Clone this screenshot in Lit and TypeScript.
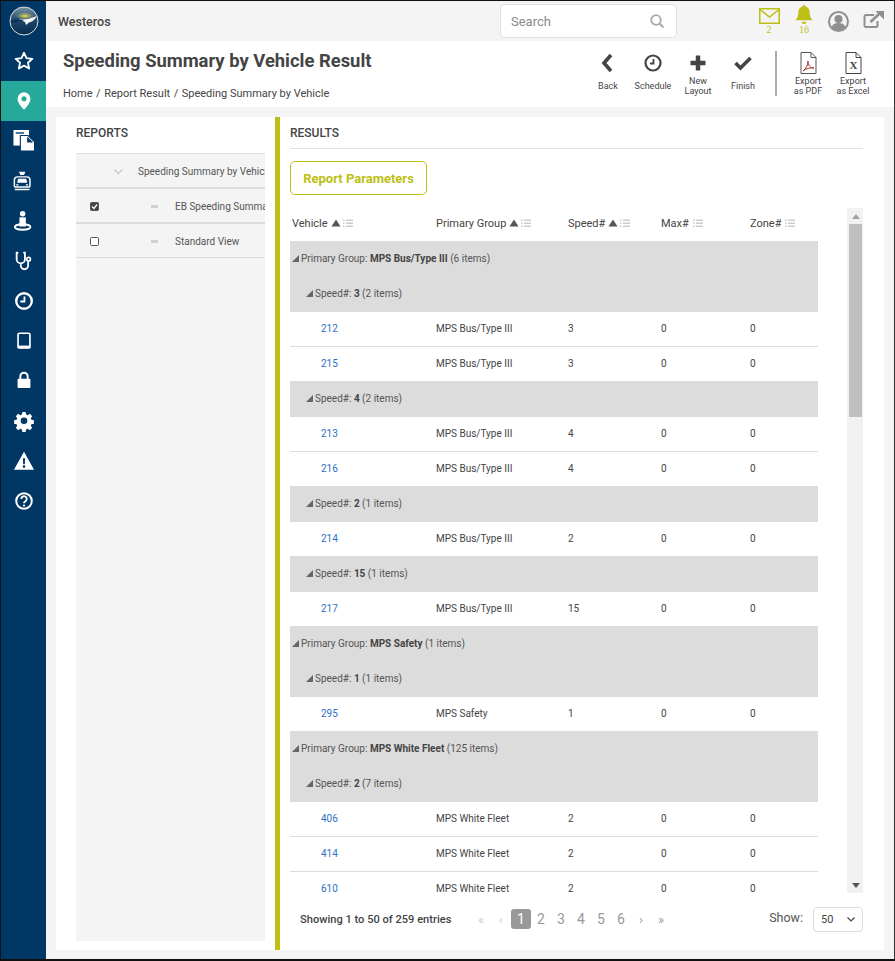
import { LitElement, html, css, svg } from "lit";
import { customElement } from "lit/decorators.js";

type Row = { g?: string; lvl?: number; label?: string; val?: string; n?: string; id?: string; pg?: string; sp?: string };
const D = (id: string, pg: string, sp: string): Row => ({ id, pg, sp });
const G = (val: string, n: string): Row => ({ lvl: 0, label: "Primary Group", val, n });
const S = (val: string, n: string): Row => ({ lvl: 1, label: "Speed#", val, n });
const BUS = "MPS Bus/Type III", WF = "MPS White Fleet";
const rows: Row[] = [
  G(BUS, "6"), S("3", "2"), D("212", BUS, "3"), D("215", BUS, "3"),
  S("4", "2"), D("213", BUS, "4"), D("216", BUS, "4"),
  S("2", "1"), D("214", BUS, "2"),
  S("15", "1"), D("217", BUS, "15"),
  G("MPS Safety", "1"), S("1", "1"), D("295", "MPS Safety", "1"),
  G(WF, "125"), S("2", "7"), D("406", WF, "2"), D("414", WF, "2"), D("610", WF, "2"),
];

const sideIcons = [
  svg`<path d="M12 3l2.700 5.900 6.400.7-4.800 4.300 1.300 6.300L12 17.100 6.400 20.200l1.300-6.300L2.900 9.600l6.400-.7z" fill="none" stroke="#fff" stroke-width="2" stroke-linejoin="round"/>`,
  svg`<path fill-rule="evenodd" d="M12 2.500a7 7 0 0 1 7 7c0 4.500-4.600 9.500-7 12-2.400-2.500-7-7.500-7-12a7 7 0 0 1 7-7zm0 4.300a2.800 2.800 0 1 0 0 5.600 2.800 2.800 0 0 0 0-5.600z" fill="#fff"/>`,
  svg`<path fill="#fff" d="M.5 0h17v17H.5z"/><path fill="#003764" d="M3 2.500h9v1.500H3z"/><path fill="#fff" stroke="#003764" stroke-width="1.200" d="M8 6h8.500l7 7v10H8z"/><path fill="#003764" d="M15.500 7v6.500h6.500z"/>`,
  svg`<g transform="translate(-2 0)"><path fill="#fff" d="M8.500 2h7L14 5.500h-4z"/><path fill="none" stroke="#fff" stroke-width="1.600" d="M7 7.500h10c2 0 3.500 1.500 3.500 3.500v6.500a1 1 0 0 1-1 1h-15a1 1 0 0 1-1-1V11c0-2 1.500-3.500 3.500-3.500z"/><path fill="#fff" d="M7.500 9.500h9l1 4.500h-11zM5.500 15.500h2.500v1.500H5.500zM16 15.500h2.500v1.500H16zM4 20.500h16V22H4z"/></g>`,
  svg`<g transform="translate(-1.500 0)"><circle cx="12" cy="4" r="3" fill="#fff"/><path fill="#fff" d="M8.500 8h7v10h-7z"/><ellipse cx="12" cy="18.500" rx="8.500" ry="3" fill="none" stroke="#fff" stroke-width="2"/></g>`,
  svg`<path fill="none" stroke="#fff" stroke-width="2" stroke-linecap="round" d="M5 3H4v7a4.500 4.500 0 0 0 9 0V3h-1M8.500 14.500V17a4 4 0 0 0 8 0v-4"/><circle cx="17" cy="10" r="2" fill="none" stroke="#fff" stroke-width="1.800"/>`,
  svg`<circle cx="12" cy="12" r="8.500" fill="none" stroke="#fff" stroke-width="2.600"/><path d="M12.500 7v5.500H8" fill="none" stroke="#fff" stroke-width="2"/>`,
  svg`<rect x="5.500" y="3.500" width="13" height="16" rx="1.500" fill="none" stroke="#fff" stroke-width="1.800"/><path d="M5 17h14v3H5z" fill="#fff"/>`,
  svg`<g transform="translate(0 -1)"><path fill="none" stroke="#fff" stroke-width="2.200" d="M8 11V8a4 4 0 0 1 8 0v3"/><rect x="5" y="10.500" width="14" height="10" rx="1" fill="#fff"/></g>`,
  svg`<path fill="#fff" fill-rule="evenodd" d="M10 2h4l.6 3 1.900.8 2.600-1.700 2.800 2.800-1.700 2.600.8 1.900 3 .6v4l-3 .6-.8 1.900 1.700 2.600-2.800 2.800-2.600-1.700-1.900.8-.6 3h-4l-.6-3-1.900-.8-2.600 1.700-2.800-2.800 1.700-2.600-.8-1.900-3-.6v-4l3-.6.8-1.900L2.100 6.900l2.800-2.800 2.600 1.700L9.400 5zM12 8.500a4 4 0 1 0 0 8 4 4 0 0 0 0-8z" transform="translate(1.200 .5) scale(.9)"/>`,
  svg`<path fill-rule="evenodd" fill="#fff" d="M12 2l11 19.500H1zM10.800 9l.3 6.500h1.800l.3-6.500zM12 16.500a1.500 1.500 0 1 0 0 3 1.500 1.500 0 0 0 0-3z"/>`,
  svg`<circle cx="12" cy="12" r="8.500" fill="none" stroke="#fff" stroke-width="2.200"/><path d="M9 9.800a3 3 0 1 1 4.600 2.500c-1 .7-1.600 1.200-1.600 2.200" fill="none" stroke="#fff" stroke-width="2"/><circle cx="12" cy="17" r="1.200" fill="#fff"/>`,
];

const actions: [string, string, any][] = [
  ["Back", "", svg`<path d="M15 4l-7 8 7 8" fill="none" stroke="#444" stroke-width="3.600"/>`],
  ["Schedule", "", svg`<circle cx="12" cy="12" r="7.500" fill="none" stroke="#444" stroke-width="2.200"/><path d="M12.500 8v4.500H9" fill="none" stroke="#444" stroke-width="1.800"/>`],
  ["New", "Layout", svg`<path d="M12 4.500v15M4.500 12h15" stroke="#444" stroke-width="4.500"/>`],
  ["Finish", "", svg`<path d="M4.500 12l5 5 10-10" fill="none" stroke="#444" stroke-width="3.600"/>`],
];

@customElement("app-root")
export class AppRoot extends LitElement {
  static styles = css`
    :host { display: block; width: 895px; height: 961px; box-sizing: border-box; border: 1px solid #111; border-right: 1px solid #333; border-bottom: 2px solid #111; background: #f4f4f4; font-family: Roboto, "Liberation Sans", sans-serif; color: #444; overflow: hidden; }
    * { box-sizing: border-box; }
    .app { display: flex; height: 100%; }
    .side { width: 45px; flex: none; background: #003764; display: flex; flex-direction: column; align-items: stretch; }
    .logo { height: 40px; display: flex; align-items: center; justify-content: center; }
    .si { height: 40px; display: flex; align-items: center; justify-content: center; }
    .si.on { background: #26a99a; }
    .main { flex: 1; min-width: 0; display: flex; flex-direction: column; }
    .top { height: 40px; flex: none; display: flex; align-items: center; padding-left: 12px; background: #f4f4f4; }
    .brand { font-size: 12.500px; font-weight: 500; width: 442px; }
    .search { width: 177px; height: 34px; border: 1px solid #e1e1e1; border-radius: 5px; background: #fff; display: flex; align-items: center; justify-content: space-between; padding: 0 11px 0 10px; font-size: 13px; color: #8a8a8a; }
    .tops { display: flex; margin-left: 80px; align-items: flex-start; height: 40px; }
    .ti { position: relative; display: flex; flex-direction: column; align-items: center; font-family: "Liberation Serif", serif; font-size: 10px; color: #bcbf14; line-height: 10px; }
    .body { flex: 1; min-height: 0; display: flex; flex-direction: column; }
    .head { height: 66px; flex: none; background: #fff; display: flex; justify-content: space-between; padding: 0 18.500px 0 17px; }
    h1 { margin: 9px 0 0; font-size: 18.400px; line-height: 22px; font-weight: 700; color: #444; }
    .crumbs { margin-top: 15px; font-size: 11px; line-height: 14px; color: #444; display: flex; gap: 3.500px; }
    .acts { display: flex; align-items: flex-start; padding-top: 10px; }
    .act { width: 45px; display: flex; flex-direction: column; align-items: center; font-size: 9px; line-height: 10px; color: #444; text-align: center; white-space: nowrap; }
    .act .lbl { height: 20px; display: flex; align-items: center; margin-top: 1px; }
    .act.ex .lbl { margin-top: 1px; }
    .sep { width: 2px; height: 45px; background: #aaa; margin: 0 9px 0 9px; }
    .content { flex: 1; min-height: 0; margin: 10px 10px 9px 10px; background: #fff; display: flex; }
    .reports { width: 219px; flex: none; padding: 0 10px 9px 20px; display: flex; flex-direction: column; }
    .ph { font-size: 12px; font-weight: 500; line-height: 14px; padding-top: 9px; color: #444; }
    .tree { flex: 1; margin-top: 13px; background: #f4f4f4; border-top: 1px solid #e1e1e1; overflow: hidden; }
    .tr { display: flex; align-items: center; height: 35px; padding-top: 2px; border-bottom: 2px solid #ddd; font-size: 10px; white-space: nowrap; overflow: hidden; color: #555; }
    .tr.last { height: 34px; border-bottom-width: 1px; }
    .chev { margin-left: 38px; margin-right: 15px; flex: none; }
    .chk { width: 9px; height: 9px; margin-left: 14px; flex: none; border: 1px solid #555; border-radius: 1.500px; background: #fff; display: flex; }
    .chk.on { background: #444; }
    .dash { width: 7px; height: 3px; background: #d2d2d2; margin-left: 52px; margin-right: 17px; flex: none; }
    .bar { width: 5px; flex: none; background: #bcbf14; }
    .results { flex: 1; min-width: 0; padding: 0 21px 0 10px; display: flex; flex-direction: column; }
    .rh { height: 32px; border-bottom: 1px solid #e1e1e1; flex: none; }
    .btn { align-self: flex-start; margin-top: 12px; width: 137px; height: 34px; border: 1px solid #bcbf14; border-radius: 5px; color: #bcbf14; font-size: 13px; font-weight: 700; display: flex; align-items: center; justify-content: center; flex: none; }
    .tbl { height: 685px; margin-top: 13px; flex: none; display: flex; overflow: hidden; }
    .gridwrap { width: 528px; flex: none; overflow: hidden; }
    .sb { width: 17px; margin-left: 29px; flex: none; background: #f1f1f1; display: flex; flex-direction: column; align-items: center; padding: 0 2px; }
    .arr { height: 16px; display: flex; align-items: center; justify-content: center; }
    .thumb { width: 13px; height: 193px; background: #bfbfbf; }
    .grow { flex: 1; }
    .row { display: grid; grid-template-columns: 146px 132px 93px 89px 1fr; height: 35px; align-items: center; font-size: 10px; color: #444; padding-bottom: 1px; }
    .row.hd { height: 33px; font-size: 11px; padding-bottom: 3px; }
    .row.hd > div { display: flex; align-items: center; }
    .row.hd > div:first-child { padding-left: 2px; }
    .sorti { margin-left: 3px; flex: none; }
    .linei { flex: none; }
    .linei.a { margin-left: 2px; }
    .linei.b { margin-left: 4px; }
    .row.d { border-bottom: 1px solid #ddd; }
    .row.d a { color: #2e6fc4; padding-left: 31px; display: block; }
    .grp { height: 35px; background: #dcdcdc; display: flex; align-items: center; font-size: 10px; color: #555; gap: 2px; padding-left: 2px; padding-bottom: 2px; white-space: pre; }
    .grp.first { height: 36px; }
    .grp.l1 { padding-left: 16px; }
    .grp b { font-weight: 700; color: #444; }
    .foot { display: flex; align-items: center; height: 40px; margin-top: 6px; padding-left: 10px; }
    .count { font-size: 11.100px; font-weight: 500; width: 171px; white-space: nowrap; }
    .pages { display: flex; align-items: center; font-size: 14px; color: #999; width: 282px; }
    .pg { width: 20px; text-align: center; }
    .pg.on { width: 20px; height: 20px; line-height: 20px; background: #999; color: #fff; border-radius: 3px; }
    .pi { width: 20px; text-align: center; font-size: 13px; color: #ccc; }
    .pi.dk { color: #999; }
    .show { font-size: 12.500px; color: #555; margin-left: auto; margin-top: -3px; }
    .sel { width: 50px; height: 25px; margin-left: 10px; margin-right: 0; border: 1px solid #ddd; border-radius: 4px; display: flex; align-items: center; justify-content: space-between; padding: 0 7px; font-size: 11px; background: #fff; color: #444; }
  `;

  sort() { return html`<svg class="sorti" width="10" height="8" viewBox="0 0 10 8"><path d="M5 0.500l4.500 7H.5z" fill="#555"/></svg>`; }
  lines(sorted = true) { return html`<svg class="linei ${sorted ? "a" : "b"}" width="10" height="8" viewBox="0 0 10 8" fill="#ccc"><path d="M0 .5h1.500V2H0zM0 3.500h1.500V5H0zM0 6.500h1.500V8H0zM3 .5h7V2H3zM3 3.500h7V5H3zM3 6.500h7V8H3z"/></svg>`; }
  tri() { return svg`<svg width="7" height="7" viewBox="0 0 7 7"><path d="M7 0v7H0z" fill="#666"/></svg>`; }

  render() {
    return html`<div class="app">
      <nav class="side">
        <div class="logo"><svg width="30" height="30" viewBox="0 0 30 30">
          <defs>
            <linearGradient id="lg" x1="0" y1="0" x2="0" y2="1"><stop offset="0" stop-color="#7d93a3"/><stop offset=".45" stop-color="#1d4a6e"/><stop offset="1" stop-color="#062b4c"/></linearGradient>
            <radialGradient id="lh"><stop offset="0" stop-color="#e6e25a"/><stop offset="1" stop-color="#c9c74a" stop-opacity="0"/></radialGradient>
          </defs>
          <circle cx="15" cy="15" r="14" fill="url(#lg)" stroke="#d8dde0" stroke-width="1"/>
          <ellipse cx="16" cy="10" rx="9" ry="4" fill="url(#lh)"/>
          <path d="M9 13c5 1 10 .5 19-3-2 4-5 5.500-8 6.500l-3 2.500-1-3z" fill="#f5f5f5"/>
          <path d="M2 16c5-3 9-3 13-1-5 0-9 .5-13 2z" fill="#062b4c"/>
        </svg></div>
        ${sideIcons.map((p, i) => html`<div class="si ${i === 1 ? "on" : ""}"><svg width="22" height="22" viewBox="0 0 24 24">${p}</svg></div>`)}
      </nav>
      <div class="main">
        <div class="top">
          <div class="brand">Westeros</div>
          <div class="search"><span>Search</span><svg width="16" height="16" viewBox="0 0 16 16"><circle cx="7" cy="7" r="4.800" fill="none" stroke="#aaa" stroke-width="1.800"/><path d="M10.500 10.500l4 4" stroke="#aaa" stroke-width="2.200"/></svg></div>
          <div class="tops">
            <div class="ti" style="width:24px;margin-right:11px;padding-top:7px"><svg width="21" height="16" viewBox="0 0 21 16"><rect x=".75" y=".75" width="19.500" height="14.500" fill="none" stroke="#bcbf14" stroke-width="1.500"/><path d="M1 1.500l9.500 7.500L20 1.500" fill="none" stroke="#bcbf14" stroke-width="1.500"/></svg><span style="margin-top:1px">2</span></div>
            <div class="ti" style="width:24px;margin-right:12px;padding-top:4px"><svg width="20" height="20" viewBox="0 0 20 21"><path d="M10 0a1.500 1.500 0 0 1 1.500 1.700C15 2.500 16 5.500 16 9c0 3 1 5 3 7H1c2-2 3-4 3-7 0-3.500 1-6.500 4.500-7.300A1.500 1.500 0 0 1 10 0zM7.500 17.500h5a2.500 2.500 0 0 1-5 0z" fill="#bcbf14"/></svg><span>16</span></div>
            <svg style="margin-top:10px;margin-right:14px" width="21" height="21" viewBox="0 0 21 21"><circle cx="10.500" cy="10.500" r="9.500" fill="none" stroke="#8f8f8f" stroke-width="2"/><circle cx="10.500" cy="8" r="4" fill="#8f8f8f"/><path d="M3.500 17c1-4.500 4-5 7-5s6 .5 7 5c-3.500 3-10.500 3-14 0z" fill="#8f8f8f"/></svg>
            <svg style="margin-top:10px" width="21" height="17" viewBox="0 0 21 17"><path d="M11 4H3a1.500 1.500 0 0 0-1.500 1.500v9.500A1.500 1.500 0 0 0 3 16h10a1.500 1.500 0 0 0 1.500-1.500V10" fill="none" stroke="#8f8f8f" stroke-width="2"/><path d="M7.500 11L17 2" stroke="#8f8f8f" stroke-width="2.600"/><path d="M12.500 0H21v8.500z" fill="#8f8f8f"/></svg>
          </div>
        </div>
        <div class="body">
          <div class="head">
            <div>
              <h1>Speeding Summary by Vehicle Result</h1>
              <div class="crumbs"><span>Home</span><span>/</span><span>Report Result</span><span>/</span><span>Speeding Summary by Vehicle</span></div>
            </div>
            <div class="acts">
              ${actions.map(([a, b, ic]) => html`<div class="act"><svg width="24" height="24" viewBox="0 0 24 24">${ic}</svg><div class="lbl"><span>${a}${b ? html`<br />${b}` : ""}</span></div></div>`)}
              <div class="sep"></div>
              <div class="act ex"><svg width="24" height="24" viewBox="0 0 24 24"><path d="M5 1.500h10l5 5v16H5z" fill="#fff" stroke="#555"/><path d="M15 1.500v5h5" fill="none" stroke="#555"/><path d="M7 20c3-2 5-6 5-10 0 4 2 7 6 7-4-.5-8 .5-11 3z" fill="none" stroke="#a33" stroke-width="1"/></svg><div class="lbl"><span>Export<br />as PDF</span></div></div>
              <div class="act ex"><svg width="24" height="24" viewBox="0 0 24 24"><path d="M5 1.500h10l5 5v16H5z" fill="#fff" stroke="#444"/><path d="M15 1.500v5h5" fill="none" stroke="#444"/><text x="12.500" y="18" text-anchor="middle" font-family="Liberation Serif" font-size="11" font-weight="700" fill="#444">X</text></svg><div class="lbl"><span>Export<br />as Excel</span></div></div>
            </div>
          </div>
          <div class="content">
            <div class="reports">
              <div class="ph">REPORTS</div>
              <div class="tree">
                <div class="tr"><svg class="chev" width="9" height="6" viewBox="0 0 9 6"><path d="M.5.5l4 4 4-4" fill="none" stroke="#ccc" stroke-width="1.500"/></svg><span>Speeding Summary by Vehicle Result</span></div>
                <div class="tr"><span class="chk on"><svg width="7" height="7" viewBox="0 0 7 7"><path d="M1 3.500l2 2 3-4" fill="none" stroke="#fff" stroke-width="1.300"/></svg></span><span class="dash"></span><span>EB Speeding Summary Report</span></div>
                <div class="tr last"><span class="chk"></span><span class="dash"></span><span>Standard View</span></div>
              </div>
            </div>
            <div class="bar"></div>
            <div class="results">
              <div class="ph rh">RESULTS</div>
              <div class="btn">Report Parameters</div>
              <div class="tbl">
                <div class="gridwrap">
                  <div class="row hd">
                    <div>Vehicle${this.sort()}${this.lines()}</div>
                    <div>Primary Group${this.sort()}${this.lines()}</div>
                    <div>Speed#${this.sort()}${this.lines()}</div>
                    <div>Max#${this.lines(false)}</div>
                    <div>Zone#${this.lines(false)}</div>
                  </div>
                  ${rows.map((r, i) =>
                    r.id
                      ? html`<div class="row d"><a>${r.id}</a><div>${r.pg}</div><div>${r.sp}</div><div>0</div><div>0</div></div>`
                      : html`<div class="grp ${r.lvl ? "l1" : ""} ${i === 0 ? "first" : ""}">${this.tri()}<span>${r.label}: <b>${r.val}</b> (${r.n} items)</span></div>`
                  )}
                </div>
                <div class="sb">
                  <div class="arr"><svg width="8" height="5" viewBox="0 0 8 5"><path d="M4 0l4 5H0z" fill="#a3a3a3"/></svg></div>
                  <div class="thumb"></div>
                  <div class="grow"></div>
                  <div class="arr"><svg width="8" height="5" viewBox="0 0 8 5"><path d="M4 5l4-5H0z" fill="#555"/></svg></div>
                </div>
              </div>
              <div class="foot">
                <div class="count">Showing 1 to 50 of 259 entries</div>
                <div class="pages">
                  <span class="pi">«</span><span class="pi">‹</span>
                  <span class="pg on">1</span><span class="pg">2</span><span class="pg">3</span><span class="pg">4</span><span class="pg">5</span><span class="pg">6</span>
                  <span class="pi dk">›</span><span class="pi dk">»</span>
                </div>
                <span class="show">Show:</span>
                <div class="sel"><span>50</span><svg width="8" height="5" viewBox="0 0 8 5"><path d="M.5.5L4 4 7.500.5" fill="none" stroke="#444" stroke-width="1.200"/></svg></div>
              </div>
            </div>
          </div>
        </div>
      </div>
    </div>`;
  }
}
